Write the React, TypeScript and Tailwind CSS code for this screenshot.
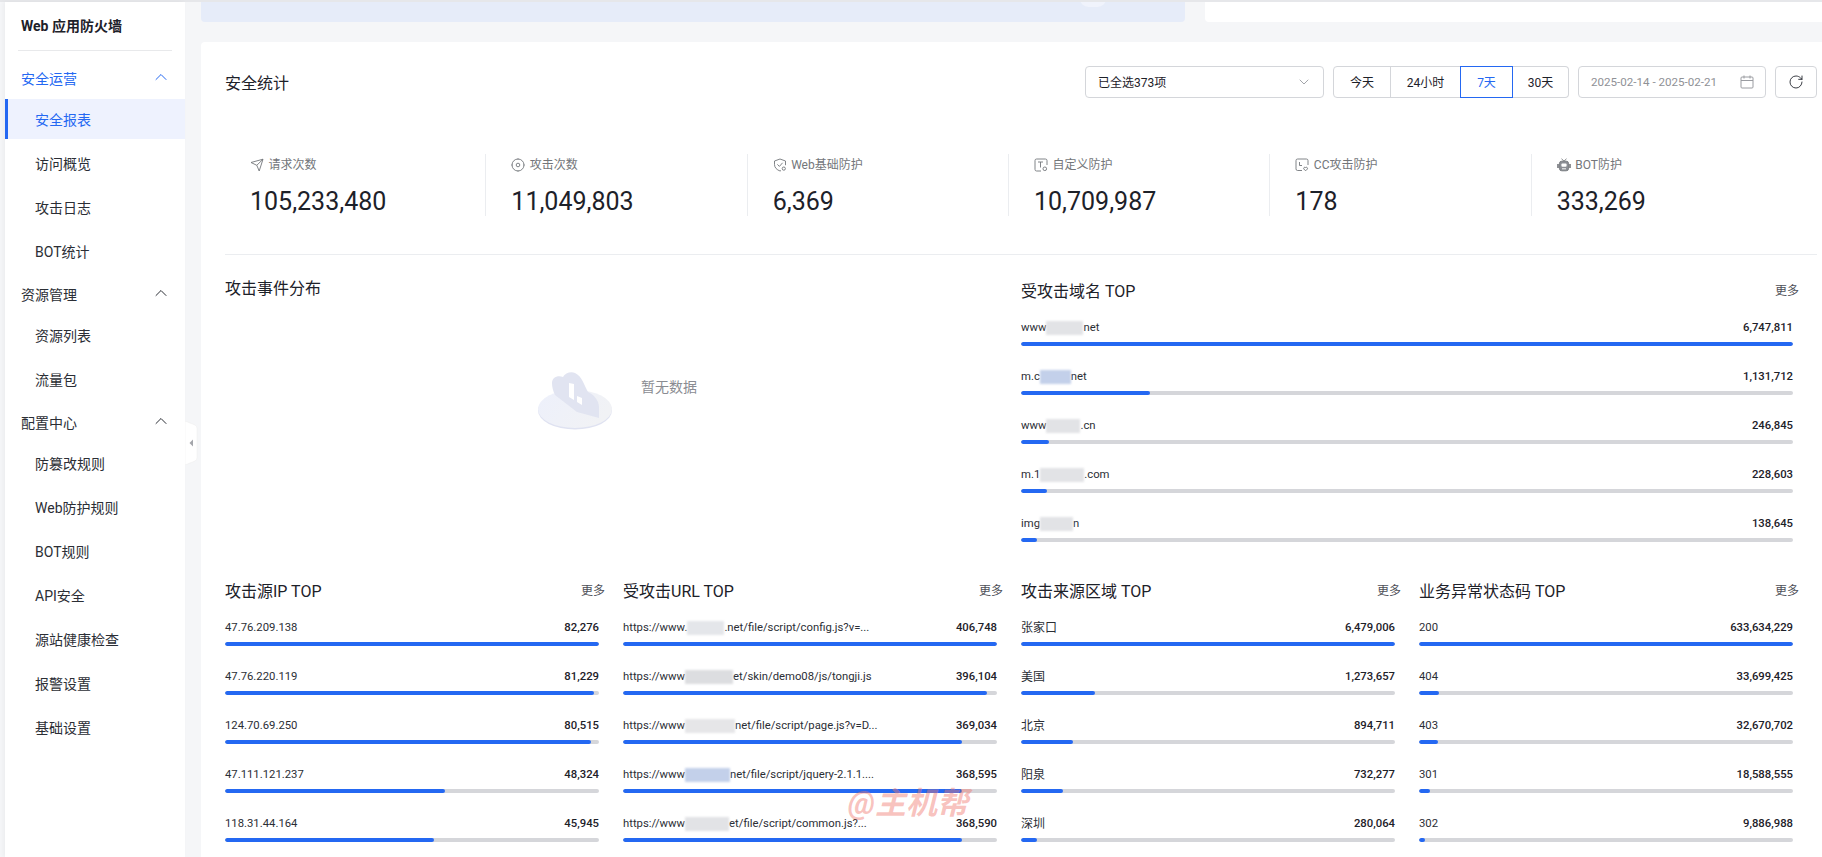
import { ChevronDown, ChevronUp, RotateCw } from "lucide-react";
import type { ReactNode } from "react";

type Row = { label: ReactNode; value: number };

function Patch({ w, color = "#e2e3e6" }: { w: number; color?: string }) {
  return (
    <span
      className="inline-block h-[14px] align-middle blur-[1px]"
      style={{ width: w, backgroundColor: color }}
    />
  );
}

const domains: Row[] = [
  { label: <>www<Patch w={37} />net</>, value: 6747811 },
  { label: <>m.c<Patch w={31} color="#c3d0ea" />net</>, value: 1131712 },
  { label: <>www<Patch w={34} />.cn</>, value: 246845 },
  { label: <>m.1<Patch w={44} />.com</>, value: 228603 },
  { label: <>img<Patch w={33} />n</>, value: 138645 },
];

const ips: Row[] = [
  { label: "47.76.209.138", value: 82276 },
  { label: "47.76.220.119", value: 81229 },
  { label: "124.70.69.250", value: 80515 },
  { label: "47.111.121.237", value: 48324 },
  { label: "118.31.44.164", value: 45945 },
];

const urls: Row[] = [
  { label: <>https://www.<Patch w={37} color="#e4e6ea" />.net/file/script/config.js?v=...</>, value: 406748 },
  { label: <>https://www<Patch w={48} color="#dcdde0" />et/skin/demo08/js/tongji.js</>, value: 396104 },
  { label: <>https://www<Patch w={50} color="#e6e6e8" />net/file/script/page.js?v=D...</>, value: 369034 },
  { label: <>https://www<Patch w={45} color="#c3d0ea" />net/file/script/jquery-2.1.1....</>, value: 368595 },
  { label: <>https://www<Patch w={44} />et/file/script/common.js?...</>, value: 368590 },
];

const regions: Row[] = [
  { label: "张家口", value: 6479006 },
  { label: "美国", value: 1273657 },
  { label: "北京", value: 894711 },
  { label: "阳泉", value: 732277 },
  { label: "深圳", value: 280064 },
];

const codes: Row[] = [
  { label: "200", value: 633634229 },
  { label: "404", value: 33699425 },
  { label: "403", value: 32670702 },
  { label: "301", value: 18588555 },
  { label: "302", value: 9886988 },
];

const icons = {
  plane: (
    <>
      <path d="M1 4.5 13 1.2 9.2 13 6.8 7.3Z" />
      <path d="M13 1.2 6.8 7.3" />
    </>
  ),
  target: (
    <>
      <circle cx="7" cy="7" r="6" />
      <circle cx="7" cy="7" r="1.8" />
      <path d="M7 .4v1.2M7 12.4v1.2M.4 7h1.2M12.4 7h1.2" />
    </>
  ),
  shield: (
    <>
      <path d="M7 1 12.5 3v4.2M7 13C3.8 11.8 1.5 9.6 1.5 6.6V3L7 1M7 13l1-.4" />
      <path d="M4.4 6.4 6.4 8.4 9.6 4.8" />
      <circle cx="10.8" cy="10.6" r="1.6" />
    </>
  ),
  text: (
    <>
      <path d="M7 13H2.6a1.6 1.6 0 0 1-1.6-1.6V2.6A1.6 1.6 0 0 1 2.6 1h8.8A1.6 1.6 0 0 1 13 2.6V7" />
      <path d="M4 4h5M6.5 4v5.5" />
      <circle cx="10.8" cy="10.8" r="1.8" />
    </>
  ),
  clock: (
    <>
      <path d="M7 12.5H2.6A1.6 1.6 0 0 1 1 10.9V2.6A1.6 1.6 0 0 1 2.6 1h8.8A1.6 1.6 0 0 1 13 2.6V7" />
      <path d="M4.5 4v3.5H7" />
      <path d="M10.6 12.8 8.8 11a1.2 1.2 0 0 1 1.8-1.5 1.2 1.2 0 0 1 1.8 1.5Z" />
    </>
  ),
  bot: (
    <>
      <path d="M4.5.8 7 3.2 9.5.8" />
      <rect x="2.4" y="3.2" width="9.2" height="9.6" rx="2.4" fill="#8b8e94" />
      <rect x="4.4" y="5.6" width="5.2" height="3.2" rx="1" fill="#fff" stroke="none" />
      <path d="M1 6v4M13 6v4" strokeWidth="1.6" />
      <path d="M5 10.8h4" stroke="#fff" />
    </>
  ),
};

const stats = [
  { icon: icons.plane, label: "请求次数", value: "105,233,480" },
  { icon: icons.target, label: "攻击次数", value: "11,049,803" },
  { icon: icons.shield, label: "Web基础防护", value: "6,369" },
  { icon: icons.text, label: "自定义防护", value: "10,709,987" },
  { icon: icons.clock, label: "CC攻击防护", value: "178" },
  { icon: icons.bot, label: "BOT防护", value: "333,269" },
];

function TopList({ title, rows, cjk }: { title: string; rows: Row[]; cjk?: boolean }) {
  const max = rows[0].value;
  return (
    <div>
      <div className="flex h-6 items-center justify-between">
        <span className="pt-px text-base text-[#1d2129]">{title}</span>
        <span className="text-xs text-[#4e5058]">更多</span>
      </div>
      <div className="mt-4 pr-[6px]">
        {rows.map((row) => (
          <div key={row.value} className="mb-[22px]">
            <div className="flex h-[18px] items-center justify-between text-[11.3px] text-[#2b2e35]">
              <span className={cjk ? "whitespace-nowrap text-xs" : "whitespace-nowrap"}>{row.label}</span>
              <span className="font-medium text-[#1d2129]">{row.value.toLocaleString("en-US")}</span>
            </div>
            <div className="mt-[5px] h-1 overflow-hidden rounded-sm bg-[#d5d6da]">
              <div
                className="h-full rounded-sm bg-[#2468f2]"
                style={{ width: `${(row.value / max) * 100}%` }}
              />
            </div>
          </div>
        ))}
      </div>
    </div>
  );
}

function NavGroup({ title, active, top }: { title: string; active?: boolean; top: string }) {
  return (
    <div className={`flex h-8 items-center justify-between pb-0.5 pl-4 pr-[14px] text-sm ${top} ${active ? "text-[#2468f2]" : "text-[#2b2e35]"}`}>
      <span>{title}</span>
      <ChevronUp size={20} strokeWidth={1.2} className="-mt-[4px]" />
    </div>
  );
}

function NavItem({ title, active }: { title: string; active?: boolean }) {
  return (
    <div
      className={
        active
          ? "mb-1 flex h-10 items-center border-l-[3px] border-[#2468f2] bg-[#eef2fe] pl-[27px] pt-px text-sm text-[#2468f2]"
          : "mb-1 flex h-10 items-center pl-[30px] pt-0.5 text-sm text-[#2b2e35]"
      }
    >
      {title}
    </div>
  );
}

function EmptyArt() {
  return (
    <svg width="74" height="58" viewBox="0 0 74 58" fill="none">
      <defs>
        <linearGradient id="disc" x1="0" y1="0" x2="1" y2="0.4">
          <stop offset="0" stopColor="#edf0fb" />
          <stop offset="1" stopColor="#f1f2f5" />
        </linearGradient>
      </defs>
      <ellipse cx="37" cy="38.5" rx="37" ry="19" fill="#dfe2f1" />
      <ellipse cx="37" cy="37" rx="37" ry="19" fill="url(#disc)" />
      <path
        d="M14 11C14 6 19 3 25 5 27 1 33-1 37 1 44 4 46 13 50 20 55 22 61 28 61 35V46L39 40 17 23C15 19 14 15 14 11Z"
        fill="#e1e4f1"
      />
      <path d="M31 11 36 12V28L31 25Z" fill="#fff" />
      <path d="M39 24 44 26V33L39 30Z" fill="#fff" />
    </svg>
  );
}

export default function App() {
  return (
    <div className="relative flex h-screen flex-col overflow-hidden bg-[#f5f6f8] [font-family:Roboto,'Noto_Sans_CJK_SC',sans-serif]">
      <div className="h-[2px] shrink-0 bg-[#e6e7ea]" />

      <div className="flex min-h-0 flex-1">
        {/* 侧边栏 */}
        <aside className="relative ml-[5px] w-[180px] shrink-0 bg-white shadow-[-2px_0_4px_rgba(0,0,0,0.04)]">
          <div className="mx-[13px] flex h-[49px] items-center border-b border-[#e8e9eb] pl-[3px] text-sm font-bold text-[#1d2129]">
            Web 应用防火墙
          </div>

          <NavGroup title="安全运营" active top="mt-[13px] mb-[3px]" />
          <NavItem title="安全报表" active />
          <NavItem title="访问概览" />
          <NavItem title="攻击日志" />
          <NavItem title="BOT统计" />

          <NavGroup title="资源管理" top="mt-[9px] mb-[3px]" />
          <NavItem title="资源列表" />
          <NavItem title="流量包" />

          <NavGroup title="配置中心" top="mt-[9px] mb-[3px]" />
          <NavItem title="防篡改规则" />
          <NavItem title="Web防护规则" />
          <NavItem title="BOT规则" />
          <NavItem title="API安全" />
          <NavItem title="源站健康检查" />
          <NavItem title="报警设置" />
          <NavItem title="基础设置" />

          {/* 收起按钮 */}
          <svg className="absolute left-[180px] top-[419px]" width="13" height="44" viewBox="0 0 13 44">
            <path d="M0 0 10 4Q12 5 12 7V37Q12 39 10 40L0 44Z" fill="#fff" stroke="#eceded" strokeWidth="0.5" />
            <path d="M8 18.5V25.5L4.5 22Z" fill="#a4a6ab" />
          </svg>
        </aside>

        <main className="min-w-0 flex-1 pl-4">
          <div className="flex h-5 gap-5">
            <div className="relative w-[984px] overflow-hidden rounded-b bg-[#e6ecf9]">
              <div className="absolute left-[879px] top-[-12px] h-[17px] w-[26px] rounded-full bg-[#f0f3fc]" />
            </div>
            <div className="flex-1 rounded-bl bg-white" />
          </div>

          <section className="mt-5 h-[900px] rounded-tl bg-white pl-6 pr-[5px] pt-6">
            {/* 标题和筛选 */}
            <div className="flex h-8 items-center justify-between">
              <h1 className="pt-1 text-base font-normal text-[#1d2129]">安全统计</h1>
              <div className="flex gap-[9px] text-xs text-[#1d2129]">
                <div className="flex h-8 w-[239px] items-center justify-between rounded border border-[#d4d6da] pl-3 pr-[11px]">
                  <span className="pt-px">已全选373项</span>
                  <ChevronDown size={16} strokeWidth={1.2} className="text-[#8b8e94]" />
                </div>
                <div className="flex h-8 w-[236px]">
                  <div className="flex w-[58px] items-center justify-center rounded-l border border-[#d4d6da] pt-px">今天</div>
                  <div className="-ml-px flex w-[71px] items-center justify-center border border-[#d4d6da] pt-px">24小时</div>
                  <div className="relative -ml-px flex w-[53px] items-center justify-center border border-[#2468f2] pt-px text-[#2468f2]">7天</div>
                  <div className="flex w-[56px] items-center justify-center rounded-r border border-l-0 border-[#d4d6da] pt-px">30天</div>
                </div>
                <div className="flex h-8 w-[188px] items-center justify-between rounded border border-[#d4d6da] pl-3 pr-[11px] text-[#8f9196]">
                  <span className="whitespace-nowrap pt-px text-[11.6px]">2025-02-14 - 2025-02-21</span>
                  <svg width="14" height="14" viewBox="0 0 14 14" fill="none" stroke="#9a9ca1" strokeWidth="1">
                    <rect x="1" y="2" width="12" height="11" rx="1" />
                    <path d="M1 5.5h12M4 .5v3M10 .5v3" />
                  </svg>
                </div>
                <div className="flex h-8 w-[42px] items-center justify-center rounded border border-[#d4d6da]">
                  <RotateCw size={16} strokeWidth={1.3} />
                </div>
              </div>
            </div>

            {/* 统计数字 */}
            <div className="mt-14 grid w-[1568px] grid-cols-6">
              {stats.map((s, i) => (
                <div key={s.label} className={i < 5 ? "h-[62px] border-r border-[#ebedf0] pl-[25px]" : "h-[62px] pl-[25px]"}>
                  <div className="flex h-5 items-center gap-[4.5px] pt-[2px] text-xs text-[#73767a]">
                    <svg width="14" height="14" viewBox="0 0 14 14" fill="none" stroke="#73767a" strokeWidth="0.9" className="shrink-0">
                      {s.icon}
                    </svg>
                    <span>{s.label}</span>
                  </div>
                  <div className="mt-3 text-[25px] leading-8 text-[#1d2129]">{s.value}</div>
                </div>
              ))}
            </div>

            <div className="mt-[38px] h-px w-full bg-[#ebedf0]" />

            {/* 上排 */}
            <div className="mt-6 grid w-[1574px] grid-cols-2 gap-[18px]">
              <div>
                <div className="-mt-[3px] flex h-6 items-center pt-px text-base text-[#1d2129]">攻击事件分布</div>
                <div className="mt-[72px] flex justify-center pl-[7px]">
                  <EmptyArt />
                  <span className="ml-[29px] mt-[5px] text-sm text-[#8a8c92]">暂无数据</span>
                </div>
              </div>
              <TopList title="受攻击域名 TOP" rows={domains} />
            </div>

            {/* 下排 */}
            <div className="mt-[15px] grid w-[1574px] grid-cols-4 gap-[18px]">
              <TopList title="攻击源IP TOP" rows={ips} />
              <TopList title="受攻击URL TOP" rows={urls} />
              <TopList title="攻击来源区域 TOP" rows={regions} cjk />
              <TopList title="业务异常状态码 TOP" rows={codes} />
            </div>
          </section>
        </main>
      </div>

      {/* 水印 */}
      <div className="absolute left-[848px] top-[784px] text-[31px] font-bold italic leading-10 text-[#f0786e]/45">
        @主机帮
      </div>
    </div>
  );
}
